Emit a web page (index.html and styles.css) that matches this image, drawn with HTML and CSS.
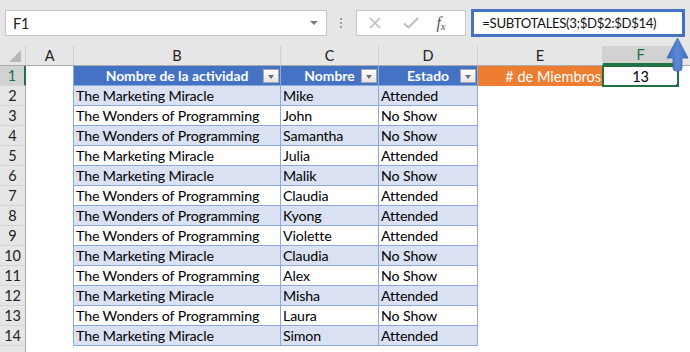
FILE: index.html
```html
<!DOCTYPE html>
<html lang="es">
<head>
<meta charset="utf-8">
<link rel="stylesheet" href="styles.css">
</head>
<body>
<div class="app">
  <div class="toolbar">
    <div class="namebox"><span class="nb-text">F1</span><span class="nb-caret"></span></div>
    <div class="dots"><i></i><i></i><i></i></div>
    <div class="fxbox">
      <svg class="ic-x" width="12" height="12" viewBox="0 0 12 12"><path d="M1 1 L11 11 M11 1 L1 11" stroke="#bcbcbc" stroke-width="1.6" fill="none"/></svg>
      <svg class="ic-check" width="16" height="12" viewBox="0 0 16 12"><path d="M1 6.5 L5.5 10.5 L15 1" stroke="#bcbcbc" stroke-width="2" fill="none"/></svg>
      <span class="ic-fx">f<sub>x</sub></span>
    </div>
    <div class="formula">=SUBTOTALES(3;$D$2:$D$14)</div>
  </div>
  <div class="sheet">
    <div class="row colhead">
      <div class="corner"><span class="tri"></span></div>
      <div class="ch">A</div><div class="ch">B</div><div class="ch">C</div><div class="ch">D</div><div class="ch">E</div><div class="ch sel">F</div><div class="ch last"></div>
    </div>
    <div class="row">
      <div class="rh sel">1</div><div class="c a"></div>
      <div class="c th">Nombre de la actividad<span class="flt"></span></div>
      <div class="c th">Nombre<span class="flt"></span></div>
      <div class="c th">Estado<span class="flt"></span></div>
      <div class="c e1"># de Miembros</div>
      <div class="c f1">13<span class="handle"></span></div><div class="c"></div>
    </div>
    <div class="row band"><div class="rh">2</div><div class="c a"></div><div class="c t">The Marketing Miracle</div><div class="c t">Mike</div><div class="c t">Attended</div><div class="c"></div><div class="c"></div><div class="c"></div></div>
    <div class="row"><div class="rh">3</div><div class="c a"></div><div class="c t">The Wonders of Programming</div><div class="c t">John</div><div class="c t">No Show</div><div class="c"></div><div class="c"></div><div class="c"></div></div>
    <div class="row band"><div class="rh">4</div><div class="c a"></div><div class="c t">The Wonders of Programming</div><div class="c t">Samantha</div><div class="c t">No Show</div><div class="c"></div><div class="c"></div><div class="c"></div></div>
    <div class="row"><div class="rh">5</div><div class="c a"></div><div class="c t">The Marketing Miracle</div><div class="c t">Julia</div><div class="c t">Attended</div><div class="c"></div><div class="c"></div><div class="c"></div></div>
    <div class="row band"><div class="rh">6</div><div class="c a"></div><div class="c t">The Marketing Miracle</div><div class="c t">Malik</div><div class="c t">No Show</div><div class="c"></div><div class="c"></div><div class="c"></div></div>
    <div class="row"><div class="rh">7</div><div class="c a"></div><div class="c t">The Wonders of Programming</div><div class="c t">Claudia</div><div class="c t">Attended</div><div class="c"></div><div class="c"></div><div class="c"></div></div>
    <div class="row band"><div class="rh">8</div><div class="c a"></div><div class="c t">The Wonders of Programming</div><div class="c t">Kyong</div><div class="c t">Attended</div><div class="c"></div><div class="c"></div><div class="c"></div></div>
    <div class="row"><div class="rh">9</div><div class="c a"></div><div class="c t">The Wonders of Programming</div><div class="c t">Violette</div><div class="c t">Attended</div><div class="c"></div><div class="c"></div><div class="c"></div></div>
    <div class="row band"><div class="rh">10</div><div class="c a"></div><div class="c t">The Marketing Miracle</div><div class="c t">Claudia</div><div class="c t">No Show</div><div class="c"></div><div class="c"></div><div class="c"></div></div>
    <div class="row"><div class="rh">11</div><div class="c a"></div><div class="c t">The Wonders of Programming</div><div class="c t">Alex</div><div class="c t">No Show</div><div class="c"></div><div class="c"></div><div class="c"></div></div>
    <div class="row band"><div class="rh">12</div><div class="c a"></div><div class="c t">The Marketing Miracle</div><div class="c t">Misha</div><div class="c t">Attended</div><div class="c"></div><div class="c"></div><div class="c"></div></div>
    <div class="row"><div class="rh">13</div><div class="c a"></div><div class="c t">The Wonders of Programming</div><div class="c t">Laura</div><div class="c t">No Show</div><div class="c"></div><div class="c"></div><div class="c"></div></div>
    <div class="row band"><div class="rh">14</div><div class="c a"></div><div class="c t">The Marketing Miracle</div><div class="c t">Simon</div><div class="c t">Attended</div><div class="c"></div><div class="c"></div><div class="c"></div></div>
    <div class="row"><div class="rh"></div><div class="c"></div><div class="c"></div><div class="c"></div><div class="c"></div><div class="c"></div><div class="c"></div><div class="c"></div></div>
  </div>
  <svg class="arrow" width="26" height="38" viewBox="0 0 26 38">
    <defs>
      <linearGradient id="ag" x1="0" y1="0" x2="1" y2="0">
        <stop offset="0" stop-color="#3f6cbf"/>
        <stop offset="0.5" stop-color="#5b88d6"/>
        <stop offset="1" stop-color="#3f6cbf"/>
      </linearGradient>
    </defs>
    <path d="M2 22 L12.5 2 L23 22 L17 22 L17 32 Q17 35 14 35 L11 35 Q8 35 8 32 L8 22 Z" fill="url(#ag)" stroke="#3b64ad" stroke-width="0.8"/>
  </svg>
</div>
</body>
</html>
```
FILE: styles.css
```css
* { box-sizing: border-box; }
html, body { margin: 0; padding: 0; }
body {
  width: 690px; height: 352px; overflow: hidden;
  background: #ffffff;
  font-family: Lato, "Open Sans", sans-serif;
  font-size: 14.2px;
  letter-spacing: -0.12px;
  color: #000;
}
.app { position: relative; width: 690px; height: 352px; }

.toolbar {
  height: 46px;
  background: #e6e6e6;
  display: flex;
  align-items: center;
  padding: 0 5px 0 5px;
}
.namebox {
  width: 322px; height: 26px;
  background: #fff;
  border: 1px solid #c6c6c6;
  display: flex; align-items: center; justify-content: space-between;
  padding: 0 8px 0 7px;
  font-size: 14.5px; color: #222;
}
.nb-caret {
  width: 0; height: 0;
  border-left: 4px solid transparent; border-right: 4px solid transparent;
  border-top: 4px solid #7a7a7a;
}
.dots {
  width: 30px; display: flex; flex-direction: column; align-items: center; gap: 2px;
}
.dots i { width: 2px; height: 2px; background: #9a9a9a; display: block; }
.fxbox {
  width: 110px; height: 26px;
  background: #fff;
  border: 1px solid #c6c6c6;
  display: flex; align-items: center;
  padding: 0 0 0 12px;
}
.ic-x { margin-right: 22px; }
.ic-check { margin-right: 17px; }
.ic-fx {
  font-family: "Liberation Serif", serif; font-style: italic;
  font-size: 16px; color: #555; line-height: 1;
}
.ic-fx sub { font-size: 11px; vertical-align: -2px; }
.formula {
  margin-left: 5px;
  width: 214px; height: 28px;
  background: #fff;
  border: 3px solid #4472c4;
  display: flex; align-items: center;
  padding-left: 8px;
  font-size: 13.2px; letter-spacing: -0.35px; color: #111;
  white-space: nowrap;
}

.sheet { display: flex; flex-direction: column; }
.row {
  display: grid;
  grid-template-columns: 26px 48px 207px 98px 99px 125px 76px 11px;
  height: 20px;
}
.colhead { background: #e6e6e6; border-bottom: 1px solid #ababab; }
.corner { border-right: 1px solid #d0d0d0; position: relative; }
.corner .tri {
  position: absolute; right: 4px; bottom: 3px;
  width: 0; height: 0;
  border-left: 12px solid transparent;
  border-bottom: 12px solid #b7b7b7;
}
.ch {
  border-right: 1px solid #d0d0d0;
  display: flex; align-items: center; justify-content: center;
  font-size: 14.5px; color: #222;
}
.ch.sel { background: #d2d2d2; color: #217346; border-bottom: 2px solid #217346; }
.ch.last { border-right: none; }

.rh {
  background: #e6e6e6;
  border-right: 1px solid #ababab;
  border-bottom: 1px solid #d4d4d4;
  display: flex; align-items: center; justify-content: center;
  font-size: 14.5px; color: #222;
}
.rh.sel { background: #d2d2d2; color: #217346; border-right: 2px solid #217346; }

.c { display: flex; align-items: center; white-space: nowrap; overflow: hidden; }
.c.a { border-right: 1px solid #8ea9db; }
.c.t {
  border-right: 1px solid #8ea9db;
  border-bottom: 1px solid #8ea9db;
  padding-left: 2px;
}
.band .c.t { background: #d9e1f2; }
.c.th {
  position: relative;
  background: #4472c4;
  color: #fff; font-weight: bold;
  font-size: 13.9px; letter-spacing: 0;
  justify-content: center;
  border-right: 1px solid #8ea9db;
  border-bottom: 1px solid #8ea9db;
}
.flt {
  position: absolute; right: 1px; top: 3px;
  width: 16px; height: 14px;
  background: linear-gradient(#ffffff, #e4e4e4);
  border: 1px solid #a9a9a9;
}
.flt::after {
  content: ""; position: absolute; left: 4px; top: 5px;
  width: 0; height: 0;
  border-left: 3.5px solid transparent; border-right: 3.5px solid transparent;
  border-top: 4px solid #6a6a6a;
}
.c.e1 {
  background: #ed7d31; color: #fff;
  font-size: 14.5px; letter-spacing: 0;
  justify-content: flex-end; padding-right: 2px;
}
.c.f1 {
  position: relative;
  justify-content: center;
  font-size: 14.5px;
  border: 2px solid #217346;
  margin: -1px 0 -1px -1px;
  height: 22px;
}
.handle {
  position: absolute; right: -4px; bottom: -4px;
  width: 6px; height: 6px; background: #217346; border: 1px solid #fff;
}
.arrow { position: absolute; left: 665px; top: 36px; }
```
